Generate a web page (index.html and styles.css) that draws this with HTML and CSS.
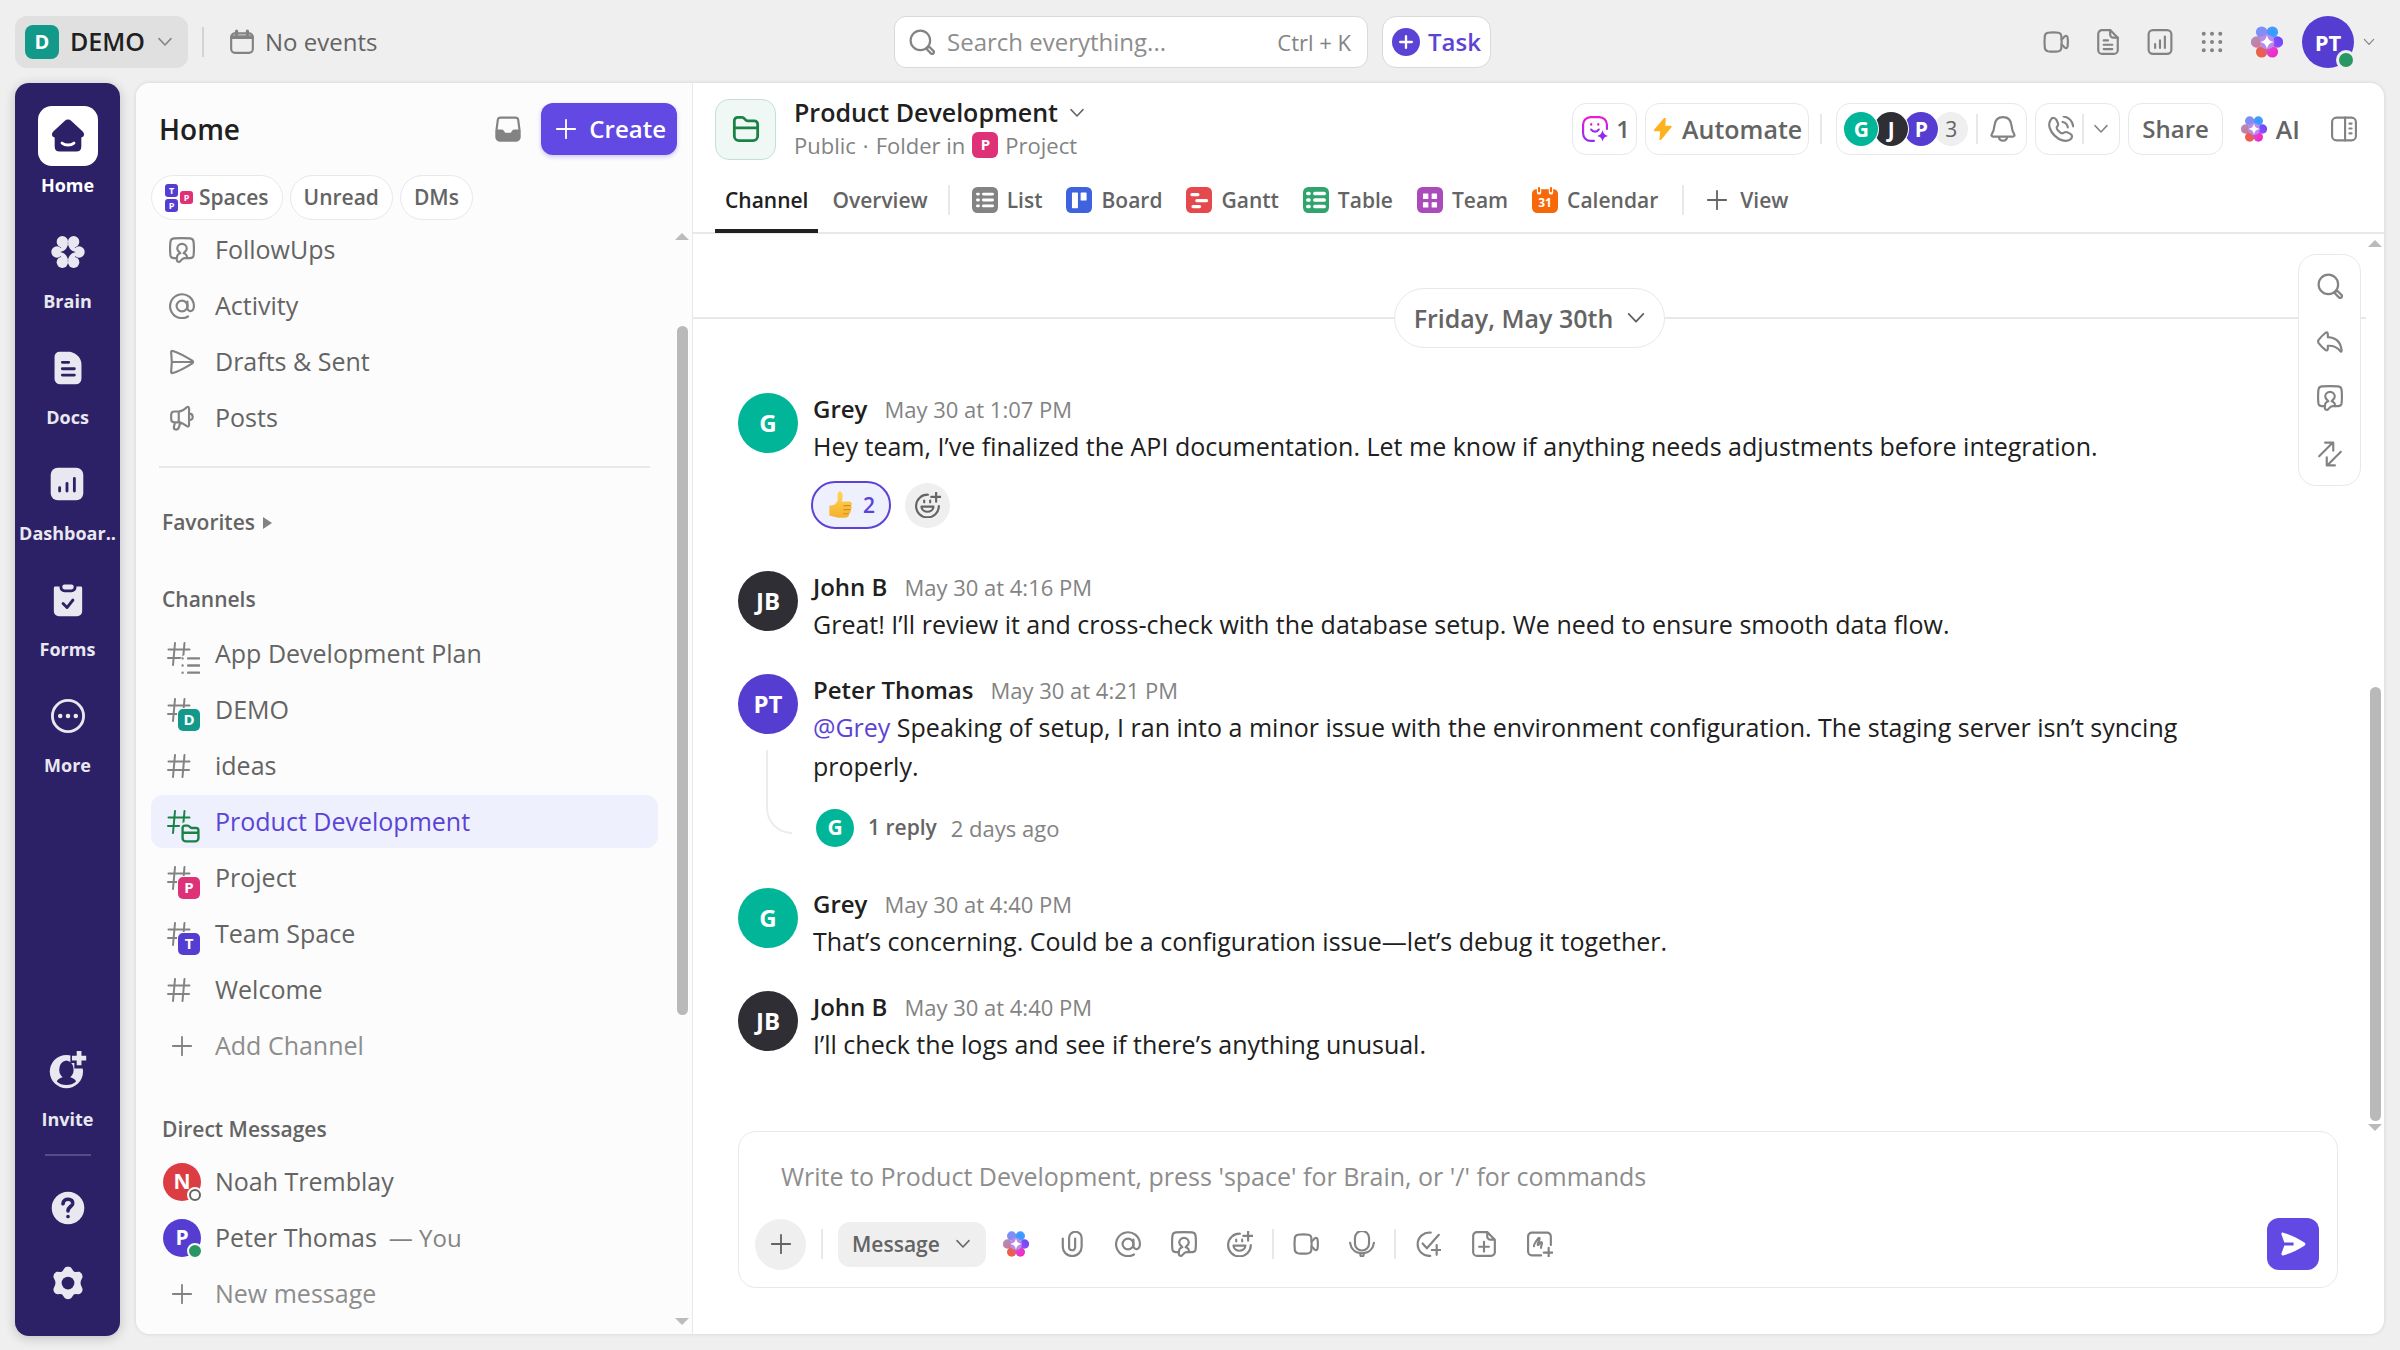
FILE: index.html
```
<!DOCTYPE html>
<html lang="en">
  <head>
    <meta charset="UTF-8" />
    <meta name="viewport" content="width=device-width, initial-scale=1.0" />
    <title>Product Development | Channel</title>
    <link rel="stylesheet" href="styles.css">
  </head>
  <body>
    <svg width="0" height="0" class="sprite">
      <defs>
        <radialGradient id="petal-sky"><stop offset="0" stop-color="#2f9bff"/><stop offset="1" stop-color="#4a9bff"/></radialGradient>
        <linearGradient id="petal-blue" x1="0" y1="0" x2="1" y2="1"><stop offset="0" stop-color="#6d94ff"/><stop offset="1" stop-color="#9a86e8"/></linearGradient>
        <linearGradient id="petal-violet" x1="1" y1="0" x2="0" y2="1"><stop offset="0" stop-color="#5a4bff"/><stop offset="1" stop-color="#a44bf0"/></linearGradient>
        <linearGradient id="petal-mauve" x1="0" y1="0" x2="1" y2="1"><stop offset="0" stop-color="#a795c4"/><stop offset="1" stop-color="#d9708a"/></linearGradient>
        <linearGradient id="petal-orange" x1="0" y1="1" x2="1" y2="0"><stop offset="0" stop-color="#f0622e"/><stop offset="1" stop-color="#dd5c86"/></linearGradient>
        <linearGradient id="petal-pink" x1="0" y1="0" x2="1" y2="1"><stop offset="0" stop-color="#d94fd0"/><stop offset="1" stop-color="#f61fc4"/></linearGradient>
        <linearGradient id="agent" x1="0" y1="0" x2="0" y2="1"><stop offset="0" stop-color="#e81bd3"/><stop offset="1" stop-color="#8f2df0"/></linearGradient>
        <linearGradient id="thumb-skin" x1="0" y1="0" x2="0" y2="1"><stop offset="0" stop-color="#ffd65a"/><stop offset="1" stop-color="#f5b02c"/></linearGradient>
      </defs>
      <symbol viewBox="0 0 24 24" id="chevron"><path d="M4 7.500l8 8.500 8-8.500"></path></symbol>
      <symbol viewBox="0 0 24 24" id="plus"><path d="M12 2v20M2 12h20"></path></symbol>
      <symbol viewBox="0 0 24 24" id="calendar">
        <rect x="2" y="4" width="20" height="18" rx="3.5"></rect>
        <path d="M3 7.5h18" stroke-width="3.4"></path>
        <path d="M7 2v3M17 2v3" stroke-width="3"></path>
      </symbol>
      <symbol viewBox="0 0 24 24" id="search">
        <circle cx="10.5" cy="10.5" r="9"></circle>
        <path d="M16.2 18.500l2.300-2.300 4 4a1.600 1.600 0 01-2.300 2.300z"></path>
      </symbol>
      <symbol viewBox="0 0 24 24" id="video">
        <path d="M4.500 3.500c3.300-.6 6.700-.6 10 0 1.500.4 2.200 1.200 2.400 2.700.4 3.800.4 7.800 0 11.600-.2 1.500-.9 2.300-2.400 2.700-3.300.6-6.700.6-10 0C2.800 20.100 2 19.300 1.700 17.800c-.4-3.800-.4-7.800 0-11.600.3-1.500 1.100-2.300 2.800-2.700z"></path>
        <path d="M17.200 9.500c1.500-.2 2-2 3-2.800 1-.8 2.200-.3 2.400.8.500 3 .5 6 0 9-.2 1.100-1.400 1.600-2.400.8-1-.8-1.500-2.600-3-2.800"></path>
      </symbol>
      <symbol viewBox="0 0 24 24" id="doc">
        <path d="M14 1H6.500A3.500 3.500 0 003 4.500v15A3.500 3.500 0 006.500 23h11a3.500 3.500 0 003.500-3.500V8z"></path>
        <path d="M14 1v4a3 3 0 003 3h4M8 10.500h4M8 14.500h8M8 18.500h8"></path>
      </symbol>
      <symbol viewBox="0 0 24 24" id="chart">
        <rect x="1.500" y="1" width="21" height="22" rx="4"></rect>
        <path d="M7.500 17.500v-3.500M12 17.500v-7M16.500 17.500V7"></path>
      </symbol>
      <symbol viewBox="0 0 24 24" id="grid">
        <path d="M3 3h.01M12 3h.01M21 3h.01M3 12h.01M12 12h.01M21 12h.01M3 21h.01M12 21h.01M21 21h.01" stroke-width="4.400"></path>
      </symbol>
      <symbol viewBox="0 0 24 24" id="brain">
        <g stroke="none">
          <circle cx="4.200" cy="12" r="4.300" fill="url(#petal-mauve)"></circle>
          <circle cx="19.800" cy="12" r="4.300" fill="url(#petal-violet)"></circle>
          <circle cx="8" cy="4.600" r="4.300" fill="url(#petal-blue)"></circle>
          <circle cx="16" cy="4.600" r="4.300" fill="url(#petal-sky)"></circle>
          <circle cx="8" cy="19.400" r="4.300" fill="url(#petal-orange)"></circle>
          <circle cx="16" cy="19.400" r="4.300" fill="url(#petal-pink)"></circle>
          <circle cx="12" cy="12" r="5.500" fill="#b98bea"></circle>
          <path d="M12 7c1 3.300 1.700 4 5 5-3.300 1-4 1.700-5 5-1-3.300-1.700-4-5-5 3.300-1 4-1.700 5-5z" fill="#fff"></path>
        </g>
      </symbol>
      <symbol viewBox="0 0 24 24" id="brain-solid">
        <g stroke="none" fill="currentColor">
          <circle cx="4.200" cy="12" r="4"></circle><circle cx="19.800" cy="12" r="4"></circle>
          <circle cx="8" cy="4.700" r="4"></circle><circle cx="16" cy="4.700" r="4"></circle>
          <circle cx="8" cy="19.300" r="4"></circle><circle cx="16" cy="19.300" r="4"></circle>
          <circle cx="12" cy="12" r="6"></circle>
          <path d="M12 6.500c1 3.500 2 4.500 5.500 5.500-3.500 1-4.500 2-5.500 5.500-1-3.500-2-4.500-5.500-5.500 3.500-1 4.500-2 5.500-5.500z" fill="#2c2166"></path>
        </g>
      </symbol>
      <symbol viewBox="0 0 24 24" id="home-solid">
        <path d="M9.600 1.400a3.400 3.400 0 014.800 0l7.800 7.300c1.900 1.900 1.200 4-.8 4.300v6.500c0 2.200-1.300 3.500-3.500 3.500H6.100c-2.200 0-3.500-1.300-3.500-3.500V13c-2-.3-2.700-2.400-.8-4.300z" fill="currentColor" stroke="none"></path>
        <path d="M7.800 17c2.300 1.800 6.100 1.800 8.400 0" stroke="#fff"></path>
      </symbol>
      <symbol viewBox="0 0 24 24" id="doc-solid">
        <path d="M6 .5h7.500c4.500 1 8 4.500 8 9V19.500a4 4 0 01-4 4h-11a4 4 0 01-4-4V4A3.500 3.500 0 016 .5z" fill="currentColor" stroke="none"></path>
        <path d="M8 8h4.500M8 12.500h8.500M8 17h8.500" stroke="#2c2166"></path>
      </symbol>
      <symbol viewBox="0 0 24 24" id="chart-solid">
        <rect x=".5" y=".5" width="23" height="23" rx="5" fill="currentColor" stroke="none"></rect>
        <path d="M6.800 17v-2.500M12 17v-5.500M17.200 17V8" stroke="#2c2166"></path>
      </symbol>
      <symbol viewBox="0 0 24 24" id="form-solid">
        <path d="M3 2.500h18a1 1 0 011 1V20a3.500 3.500 0 01-3.500 3.500h-13A3.500 3.500 0 012 20V3.500a1 1 0 011-1z" fill="currentColor" stroke="none"></path>
        <rect x="7" y="0" width="10" height="5.500" rx="2.500" fill="currentColor" stroke="#2c2166"></rect>
        <path d="M8.500 14.500l2.800 2.800 4.200-5.300" stroke="#2c2166"></path>
      </symbol>
      <symbol viewBox="0 0 24 24" id="more">
        <circle cx="12" cy="12" r="11"></circle>
        <path d="M6.500 12h.01M12 12h.01M17.500 12h.01" stroke-width="3.200"></path>
      </symbol>
      <symbol viewBox="0 0 24 24" id="invite">
        <circle cx="11" cy="13" r="10.500" fill="currentColor" stroke="none"></circle>
        <path d="M11 6a5 5.800 0 012.400 10.500c2 .5 3.200 1.400 3.700 2.700-3 3-9.200 3-12.200 0 .5-1.300 1.700-2.200 3.700-2.700A5 5.800 0 0111 6z" fill="#2c2166" stroke="none"></path>
        <path d="M19 0v11M13.500 4.500h11" stroke="#2c2166" stroke-width="6" stroke-linecap="butt"></path>
        <path d="M19 0v9M14.500 4.500h9" stroke-width="3" stroke-linecap="butt"></path>
      </symbol>
      <symbol viewBox="0 0 24 24" id="help">
        <circle cx="12" cy="12" r="11.500" fill="currentColor" stroke="none"></circle>
        <path d="M8.500 9c.2-4.500 7.500-4 6.800 0-.4 2-3.300 2.200-3.300 5M12 18h.01" stroke="#2c2166" stroke-width="2.600"></path>
      </symbol>
      <symbol viewBox="0 0 24 24" id="gear">
        <path d="M9.500 1.500c1-1.300 4-1.300 5 0l1.300 2c.4.500 1 .8 1.700.7l2-.1c1.700 0 3.300 2.600 2.600 4.200l-1 2.200c-.3.900-.3 2.100 0 3l1 2.200c.7 1.600-.9 4.200-2.600 4.200l-2-.1c-.7-.1-1.300.2-1.700.7l-1.300 2c-1 1.300-4 1.300-5 0l-1.300-2c-.4-.5-1-.8-1.700-.7l-2 .1c-1.700 0-3.300-2.600-2.600-4.200l1-2.200c.3-.9.3-2.100 0-3l-1-2.200C1.200 6.700 2.800 4.100 4.500 4.100l2 .1c.7.1 1.300-.2 1.700-.7z" fill="currentColor" stroke="none"></path>
        <circle cx="12" cy="12" r="4.500" fill="#2c2166" stroke="none"></circle>
      </symbol>
      <symbol viewBox="0 0 24 24" id="inbox">
        <path d="M5 1.500h14a2.500 2.500 0 012.400 2l1.100 8.500v7.500a3 3 0 01-3 3h-15a3 3 0 01-3-3V12l1.100-8.500A2.500 2.500 0 015 1.500z"></path>
        <path d="M1.500 13.500h5c1.200 0 1.500 3 3 3h5c1.500 0 1.800-3 3-3h5v6a3 3 0 01-3 3h-15a3 3 0 01-3-3z" fill="currentColor"></path>
      </symbol>
      <symbol viewBox="0 0 24 24" id="followup">
        <path d="M7 19.500H4.500C2.500 19.500 1.500 18.500 1.300 17c-.4-4-.4-8.500 0-12.500C1.500 2.500 2.500 1.500 4.500 1.300c5-.4 10-.4 15 0 2 .2 3 1.200 3.200 3.200.4 4 .4 8.500 0 12.500-.2 1.500-1.200 2.500-3.200 2.500h-5c-2 0-3.200 1.800-4.200 3-.8.900-3 .5-3-1z"></path>
        <path d="M7.300 19.500c0-2.500 1-4 3.200-4.500-.3-1-2.900-1.700-2.900-4.300a4.400 4.400 0 018.800 0c0 2.600-2.600 3.300-2.900 4.300 2.200.5 3.200 2 3.200 4.500"></path>
      </symbol>
      <symbol viewBox="0 0 24 24" id="at">
        <circle cx="12" cy="12" r="5"></circle>
        <path d="M17 8v5.500c0 4.500 6 4.500 6-1.500A11 11 0 1017.500 21.700"></path>
      </symbol>
      <symbol viewBox="0 0 24 24" id="send">
        <path d="M3.500 1.800C9 3.500 15 6.700 21.500 10.800c1 .7 1 1.700 0 2.400C15 17.300 9 20.500 3.500 22.200c-1.200.3-1.700-.4-1.500-1.400.8-6 .8-11.600 0-17.600-.2-1 .3-1.700 1.500-1.400zM3 12h19"></path>
      </symbol>
      <symbol viewBox="0 0 24 24" id="posts">
        <path d="M9 6H5c-2 0-3 1-3 3v4c0 2 1 3 3 3h4c3 .3 5 1.500 7.500 3.500 1 .7 2 .3 2-1V3c0-1.300-1-1.700-2-1C14 4.500 12 5.700 9 6zM9 6v10M5.500 16l-1 4.500c-.3 2.500 3.500 3 4.500.5l1.500-5M18.500 8c4-.3 5 5.500 0 6"></path>
      </symbol>
      <symbol viewBox="0 0 24 24" id="hash"><path d="M8 1L6 23M17.500 1l-2 22M1.500 7.500h21M1 16h21"></path></symbol>
      <symbol viewBox="0 0 24 24" id="folder">
        <path d="M2 17V5a3 3 0 013-3h3.500c2.500 0 2.500 3 5 3H19a3 3 0 013 3v10a4 4 0 01-4 4H6a4 4 0 01-4-4zM2 11h20"></path>
      </symbol>
      <symbol viewBox="0 0 24 24" id="list"><path d="M2 3h.01M2 12h.01M2 21h.01M9 3h14M9 12h14M9 21h14"></path></symbol>
      <symbol viewBox="0 0 24 24" id="agent-face">
        <path d="M11 23H8a7 7 0 01-7-7V8a7 7 0 017-7h8a7 7 0 017 7v4"></path>
        <path d="M8.500 7.500v.5M15 7.500v.5M8.500 12.500c1.500 2.500 5.500 2.500 7 0"></path>
        <path d="M19 13c1 3.500 1.700 4.200 5 5.500-3.300 1-4 1.700-5 5-1-3.300-1.700-4-5-5 3.300-1.300 4-2 5-5.500z" fill="#9a25ee" stroke="none"></path>
      </symbol>
      <symbol viewBox="0 0 24 24" id="bolt"><path d="M14 .5L3 13.500h7L9 23.500l11.500-14H13.500z" fill="#ffb220" stroke="#ffb220"></path></symbol>
      <symbol viewBox="0 0 24 24" id="bell">
        <path d="M12 1c-4.500 0-7.300 3-7.800 7.500-.3 3-.5 5.500-2.600 8.500-.6 1.200.1 2 1.300 2h18.200c1.200 0 1.900-.8 1.300-2-2.100-3-2.300-5.500-2.600-8.500C19.300 4 16.500 1 12 1zM8 19c.7 5 7.300 5 8 0"></path>
      </symbol>
      <symbol viewBox="0 0 24 24" id="phone">
        <path d="M2.500 3.500c1.500-2.500 4.300-2 5.200 0l1.500 3.200c.7 1.800-.7 2.700-1.200 4-.3 1.500 3.700 5.500 5.500 5.300 1.300-.4 2.200-1.800 4-1.100l3.200 1.600c1.700.9 2.200 3.400 0 5C12 27.500-3.500 12.500 2.500 3.500zM13.500 5.500c2.800.5 4.300 2 4.800 5M14.500.5c4.700.8 7.800 3.800 8.800 9"></path>
      </symbol>
      <symbol viewBox="0 0 24 24" id="panel">
        <rect x="1" y="1.500" width="22" height="21" rx="4"></rect>
        <path d="M13 1.500v21M17 7h2M17 11.500h2M17 16h2"></path>
      </symbol>
      <symbol viewBox="0 0 24 24" id="view-list">
        <rect width="24" height="24" rx="5" fill="#838383" stroke="none"></rect>
        <path d="M5 6.500h1M5 12h1M5 17.500h1M10.500 6.500h8.500M10.500 12h8.500M10.500 17.500h8.500" stroke="#fff" stroke-width="2.600"></path>
      </symbol>
      <symbol viewBox="0 0 24 24" id="view-board">
        <rect width="24" height="24" rx="5" fill="#3e63dd" stroke="none"></rect>
        <path d="M6 5.500h4.500V19H6zM14 5.500h4.500v6.500H14z" fill="#fff" stroke="#fff" stroke-width="1"></path>
      </symbol>
      <symbol viewBox="0 0 24 24" id="view-gantt">
        <rect width="24" height="24" rx="5" fill="#e5484d" stroke="none"></rect>
        <path d="M5.500 7h5.500M10 12.500h9M6.500 18h6" stroke="#fff" stroke-width="3"></path>
      </symbol>
      <symbol viewBox="0 0 24 24" id="view-table">
        <rect width="24" height="24" rx="5" fill="#30a46c" stroke="none"></rect>
        <path d="M4.500 6h1M4.500 12h1M4.500 18h1M11 6h8.500M11 12h8.500M11 18h8.500" stroke="#fff" stroke-width="3.400"></path>
      </symbol>
      <symbol viewBox="0 0 24 24" id="view-team">
        <rect width="24" height="24" rx="5" fill="#ab4aba" stroke="none"></rect>
        <path d="M6 6.500h4v4H6zM14 6.500h4v4h-4zM6 14.500h4v4H6zM14 14.500h4v4h-4z" fill="#fff" stroke="#fff" stroke-width="1"></path>
      </symbol>
      <symbol viewBox="0 0 24 24" id="emoji-add">
        <path d="M12 2.500A10.500 10.500 0 1022 13M8.500 8v1.500M14 8v1.500M6 13.500h11c-.3 6.300-10.700 6.300-11 0zM19.500 0v9M15 4.500h9"></path>
      </symbol>
      <symbol viewBox="0 0 24 24" id="clip">
        <path d="M3.500 7v7.500a8.700 8.700 0 0017.400 0V6.500a5.800 5.800 0 00-11.600 0v8.500a2.800 2.800 0 005.600 0V7"></path>
      </symbol>
      <symbol viewBox="0 0 24 24" id="mic">
        <rect x="5.500" y="0" width="13" height="18" rx="6.500"></rect>
        <path d="M1 11c.8 5.500 4.700 9.500 11 9.500s10.200-4 11-9.500M10.500 20.500V22a1.500 1.500 0 003 0v-1.500"></path>
      </symbol>
      <symbol viewBox="0 0 24 24" id="task-add">
        <path d="M14.500 1.500A10.800 10.800 0 1014 23M7 11.500l4 4.500L22 3.500M20 13v9M15.500 17.500h9"></path>
      </symbol>
      <symbol viewBox="0 0 24 24" id="doc-add">
        <path d="M15 1H5.500A3.500 3.500 0 002 4.500v15A3.500 3.500 0 005.500 23h13a3.500 3.500 0 003.500-3.500V8zM15 1v4a3 3 0 003 3h4M12 10v9M7.500 14.500h9"></path>
      </symbol>
      <symbol viewBox="0 0 24 24" id="board-add">
        <path d="M13 22.500H4.500a3.500 3.500 0 01-3.500-3.500V5a3.500 3.500 0 013.500-3.500h14A3.500 3.500 0 0122 5v8M6.500 14c-.5-1 4-8.500 5-7.500s-2.500 6-1.500 6.500 2.500-3.500 3.500-2.500-1 4-.5 5M20 15.500v9M15.500 20h9"></path>
      </symbol>
      <symbol viewBox="0 0 24 24" id="reply">
        <path d="M10 7.500V5c0-1.800-1-2.300-2.300-1.300C5 5.800 3.500 7.500 1.500 10c-.6 1-.6 2 0 3 2 2.500 3.500 4.200 6.200 6.300 1.300 1 2.300.5 2.300-1.300v-2.500c5-.3 8.500 1 11.500 5 .7.700 1.300.3 1.200-.7C22 12 17.500 8 10 7.500z"></path>
      </symbol>
      <symbol viewBox="0 0 24 24" id="sync">
        <path d="M2 14L14 2M7.500 1.500H15v7.500M22 10L10 22M16.500 22.500H9V15"></path>
      </symbol>
      <symbol viewBox="0 0 24 24" id="thumb">
        <path d="M9 8.500C9.500 6 8.500 3 9.500 1c1-1.500 3.500-.5 3.800 2 .4 2.500-.3 4-.8 6h6.500c2.500 0 3 2.500 1.500 3.500 1.200 1 1 3-.5 3.600.9 1.200.3 2.900-1.200 3.300.3 1.600-.7 3.300-2.500 3.300-5 .4-7 .3-10-.7L2 21v-8.500c4 0 5.500-1.500 7-4z" fill="url(#thumb-skin)" stroke="none"></path>
        <path d="M14.500 12.500h5.500M14.500 16h5.500M14 19.500h4.500" stroke="#d98a1c" stroke-width="1"></path>
      </symbol>
    </svg>

    <div class="app">
      <header class="topbar">
        <div class="topbar-side">
          <button class="workspace"><span class="tile tile-lg teal">D</span>DEMO<svg class="icon icon-xs"><use href="#chevron"></use></svg></button>
          <span class="rule"></span>
          <button class="plain events"><svg class="icon"><use href="#calendar"></use></svg>No events</button>
        </div>
        <div class="topbar-center">
          <label class="search">
            <svg class="icon"><use href="#search"></use></svg>
            <input type="text" placeholder="Search everything..." aria-label="Search everything" />
            <kbd>Ctrl + K</kbd>
          </label>
          <button class="box task"><span class="plus-dot"><svg class="icon"><use href="#plus"></use></svg></span>Task</button>
        </div>
        <div class="topbar-side topbar-end">
          <button class="plain" aria-label="Clips"><svg class="icon"><use href="#video"></use></svg></button>
          <button class="plain" aria-label="Notepad"><svg class="icon"><use href="#doc"></use></svg></button>
          <button class="plain" aria-label="Reports"><svg class="icon"><use href="#chart"></use></svg></button>
          <button class="plain" aria-label="Apps"><svg class="icon icon-sm"><use href="#grid"></use></svg></button>
          <button class="plain" aria-label="Brain"><svg class="icon icon-lg"><use href="#brain"></use></svg></button>
          <button class="plain profile" aria-label="Profile"><span class="avatar avatar-md indigo">PT<i class="status online"></i></span><svg class="icon icon-xs"><use href="#chevron"></use></svg></button>
        </div>
      </header>

      <nav class="rail">
        <a href="#" class="rail-item active"><span class="rail-tile"><svg class="icon icon-xl"><use href="#home-solid"></use></svg></span>Home</a>
        <a href="#" class="rail-item"><span class="rail-tile"><svg class="icon icon-xl"><use href="#brain-solid"></use></svg></span>Brain</a>
        <a href="#" class="rail-item"><span class="rail-tile"><svg class="icon icon-xl"><use href="#doc-solid"></use></svg></span>Docs</a>
        <a href="#" class="rail-item"><span class="rail-tile"><svg class="icon icon-xl"><use href="#chart-solid"></use></svg></span>Dashboar..</a>
        <a href="#" class="rail-item"><span class="rail-tile"><svg class="icon icon-xl"><use href="#form-solid"></use></svg></span>Forms</a>
        <a href="#" class="rail-item"><span class="rail-tile"><svg class="icon icon-xl"><use href="#more"></use></svg></span>More</a>
        <a href="#" class="rail-item rail-invite"><span class="rail-tile"><svg class="icon icon-xxl"><use href="#invite"></use></svg></span>Invite</a>
        <hr />
        <a href="#" class="rail-item" aria-label="Help"><span class="rail-tile"><svg class="icon icon-xl"><use href="#help"></use></svg></span></a>
        <a href="#" class="rail-item" aria-label="Settings"><span class="rail-tile"><svg class="icon icon-xl"><use href="#gear"></use></svg></span></a>
      </nav>

      <div class="panel">
        <aside class="sidebar">
          <div class="sidebar-head">
            <h1>Home</h1>
            <button class="plain" aria-label="Inbox"><svg class="icon"><use href="#inbox"></use></svg></button>
            <button class="create"><svg class="icon icon-sm"><use href="#plus"></use></svg>Create</button>
          </div>
          <div class="pills">
            <button class="pill spaces">
              <span class="space-tiles"><i class="mini indigo">T</i><i class="mini indigo">P</i><i class="mini pink">P</i></span>Spaces
            </button>
            <button class="pill">Unread</button>
            <button class="pill">DMs</button>
          </div>
          <div class="sidebar-scroll">
            <div class="sidebar-list">
              <a href="#" class="row"><span class="row-icon"><svg class="icon"><use href="#followup"></use></svg></span>FollowUps</a>
              <a href="#" class="row"><span class="row-icon"><svg class="icon"><use href="#at"></use></svg></span>Activity</a>
              <a href="#" class="row"><span class="row-icon"><svg class="icon"><use href="#send"></use></svg></span>Drafts &amp; Sent</a>
              <a href="#" class="row"><span class="row-icon"><svg class="icon"><use href="#posts"></use></svg></span>Posts</a>
              <hr />
              <h2 class="favorites">Favorites <i class="caret"></i></h2>
              <h2>Channels</h2>
              <a href="#" class="row"><span class="row-icon"><svg class="icon hash"><use href="#hash"></use></svg><svg class="icon corner"><use href="#list"></use></svg></span>App Development Plan</a>
              <a href="#" class="row"><span class="row-icon"><svg class="icon hash"><use href="#hash"></use></svg><i class="tile corner teal">D</i></span>DEMO</a>
              <a href="#" class="row"><span class="row-icon"><svg class="icon hash"><use href="#hash"></use></svg></span>ideas</a>
              <a href="#" class="row selected"><span class="row-icon"><svg class="icon hash"><use href="#hash"></use></svg><svg class="icon corner"><use href="#folder"></use></svg></span>Product Development</a>
              <a href="#" class="row"><span class="row-icon"><svg class="icon hash"><use href="#hash"></use></svg><i class="tile corner pink">P</i></span>Project</a>
              <a href="#" class="row"><span class="row-icon"><svg class="icon hash"><use href="#hash"></use></svg><i class="tile corner indigo">T</i></span>Team Space</a>
              <a href="#" class="row"><span class="row-icon"><svg class="icon hash"><use href="#hash"></use></svg></span>Welcome</a>
              <a href="#" class="row muted"><span class="row-icon"><svg class="icon icon-sm"><use href="#plus"></use></svg></span>Add Channel</a>
              <h2 class="dm-title">Direct Messages</h2>
              <a href="#" class="row"><span class="row-icon"><span class="avatar avatar-sm red">N<i class="status offline"></i></span></span>Noah Tremblay</a>
              <a href="#" class="row"><span class="row-icon"><span class="avatar avatar-sm indigo">P<i class="status online"></i></span></span>Peter Thomas <small>— You</small></a>
              <a href="#" class="row muted"><span class="row-icon"><svg class="icon icon-sm"><use href="#plus"></use></svg></span>New message</a>
            </div>
            <div class="scrollbar"><i class="arrow up"></i><i class="space space-sidebar"></i><i class="thumb thumb-sidebar"></i><i class="rest"></i><i class="arrow down"></i></div>
          </div>
        </aside>

        <main class="main">
          <header class="channel-head">
            <span class="folder-tile"><svg class="icon icon-xl"><use href="#folder"></use></svg></span>
            <div class="channel-title">
              <button class="plain title">Product Development<svg class="icon icon-xs"><use href="#chevron"></use></svg></button>
              <p>Public <span class="dot">·</span> Folder in <span class="tile pink">P</span> <a href="#">Project</a></p>
            </div>
            <div class="channel-tools">
              <button class="box agent"><svg class="icon"><use href="#agent-face"></use></svg>1</button>
              <button class="box automate"><svg class="icon icon-sm"><use href="#bolt"></use></svg>Automate</button>
              <span class="rule"></span>
              <div class="box people">
                <button class="plain faces" aria-label="3 members"><span class="avatar green">G</span><span class="avatar dark">J</span><span class="avatar indigo">P</span><span class="avatar count">3</span></button>
                <span class="rule"></span>
                <button class="plain" aria-label="Notifications"><svg class="icon"><use href="#bell"></use></svg></button>
              </div>
              <div class="box call">
                <button class="plain" aria-label="SyncUp"><svg class="icon"><use href="#phone"></use></svg></button>
                <span class="rule"></span>
                <button class="plain" aria-label="Call options"><svg class="icon icon-xs"><use href="#chevron"></use></svg></button>
              </div>
              <button class="box">Share</button>
              <button class="plain ai"><svg class="icon"><use href="#brain"></use></svg>AI</button>
              <button class="plain" aria-label="Toggle panel"><svg class="icon"><use href="#panel"></use></svg></button>
            </div>
          </header>

          <nav class="tabs">
            <a href="#" class="tab current">Channel</a>
            <a href="#" class="tab">Overview</a>
            <span class="rule"></span>
            <a href="#" class="tab"><svg class="icon"><use href="#view-list"></use></svg>List</a>
            <a href="#" class="tab"><svg class="icon"><use href="#view-board"></use></svg>Board</a>
            <a href="#" class="tab"><svg class="icon"><use href="#view-gantt"></use></svg>Gantt</a>
            <a href="#" class="tab"><svg class="icon"><use href="#view-table"></use></svg>Table</a>
            <a href="#" class="tab"><svg class="icon"><use href="#view-team"></use></svg>Team</a>
            <a href="#" class="tab">
              <svg class="icon" viewBox="0 0 24 24">
                <path d="M4 2h16a4 4 0 014 4v13a5 5 0 01-5 5H5a5 5 0 01-5-5V6a4 4 0 014-4z" fill="#f76808" stroke="none"></path>
                <path d="M6.500 0v5M17.500 0v5" stroke="#fff" stroke-width="4"></path>
                <path d="M6.500 1v3M17.500 1v3" stroke="#f76808" stroke-width="2"></path>
                <text x="12" y="18.500" font-size="11" font-weight="700" text-anchor="middle" fill="#fff" stroke="none">31</text>
              </svg>Calendar</a>
            <span class="rule"></span>
            <button class="tab plain add-view"><svg class="icon icon-sm"><use href="#plus"></use></svg>View</button>
          </nav>

          <div class="chat">
            <div class="chat-column">
              <div class="feed">
                <div class="date-line"><button class="date-pill">Friday, May 30th<svg class="icon icon-sm"><use href="#chevron"></use></svg></button></div>
                <article class="message">
                  <span class="avatar avatar-lg green">G</span>
                  <div class="message-body">
                    <div class="meta"><strong>Grey</strong><time>May 30 at 1:07 PM</time></div>
                    <p>Hey team, I’ve finalized the API documentation. Let me know if anything needs adjustments before integration.</p>
                    <div class="reactions">
                      <button class="reaction"><svg class="icon"><use href="#thumb"></use></svg>2</button>
                      <button class="react-add" aria-label="Add reaction"><svg class="icon"><use href="#emoji-add"></use></svg></button>
                    </div>
                  </div>
                </article>
                <article class="message">
                  <span class="avatar avatar-lg dark">JB</span>
                  <div class="message-body">
                    <div class="meta"><strong>John B</strong><time>May 30 at 4:16 PM</time></div>
                    <p>Great! I’ll review it and cross-check with the database setup. We need to ensure smooth data flow.</p>
                  </div>
                </article>
                <article class="message threaded">
                  <span class="avatar avatar-lg indigo">PT</span>
                  <div class="message-body">
                    <div class="meta"><strong>Peter Thomas</strong><time>May 30 at 4:21 PM</time></div>
                    <p><a href="#">@Grey</a> Speaking of setup, I ran into a minor issue with the environment configuration. The staging server isn’t syncing properly.</p>
                    <div class="thread"><span class="avatar avatar-sm green">G</span><a href="#">1 reply</a><time>2 days ago</time></div>
                  </div>
                </article>
                <article class="message">
                  <span class="avatar avatar-lg green">G</span>
                  <div class="message-body">
                    <div class="meta"><strong>Grey</strong><time>May 30 at 4:40 PM</time></div>
                    <p>That’s concerning. Could be a configuration issue—let’s debug it together.</p>
                  </div>
                </article>
                <article class="message">
                  <span class="avatar avatar-lg dark">JB</span>
                  <div class="message-body">
                    <div class="meta"><strong>John B</strong><time>May 30 at 4:40 PM</time></div>
                    <p>I’ll check the logs and see if there’s anything unusual.</p>
                  </div>
                </article>
              </div>
              <div class="scrollbar"><i class="arrow up"></i><i class="space space-chat"></i><i class="thumb thumb-chat"></i><i class="rest"></i><i class="arrow down"></i></div>
              <div class="float-tools">
                <button class="plain" aria-label="Search channel"><svg class="icon"><use href="#search"></use></svg></button>
                <button class="plain" aria-label="Replies"><svg class="icon"><use href="#reply"></use></svg></button>
                <button class="plain" aria-label="FollowUps"><svg class="icon"><use href="#followup"></use></svg></button>
                <button class="plain" aria-label="SyncUps"><svg class="icon"><use href="#sync"></use></svg></button>
              </div>
            </div>

            <form class="composer">
              <textarea rows="1" aria-label="Message" placeholder="Write to Product Development, press 'space' for Brain, or '/' for commands"></textarea>
              <div class="composer-bar">
                <button type="button" class="round" aria-label="Add"><svg class="icon icon-sm"><use href="#plus"></use></svg></button>
                <span class="rule"></span>
                <label class="kind">
                  <select aria-label="Type"><option>Message</option></select>
                  <svg class="icon icon-xs"><use href="#chevron"></use></svg>
                </label>
                <button type="button" class="plain tool" aria-label="Brain"><svg class="icon"><use href="#brain"></use></svg></button>
                <button type="button" class="plain tool" aria-label="Attach"><svg class="icon"><use href="#clip"></use></svg></button>
                <button type="button" class="plain tool" aria-label="Mention"><svg class="icon"><use href="#at"></use></svg></button>
                <button type="button" class="plain tool" aria-label="FollowUp"><svg class="icon"><use href="#followup"></use></svg></button>
                <button type="button" class="plain tool" aria-label="Emoji"><svg class="icon"><use href="#emoji-add"></use></svg></button>
                <span class="rule"></span>
                <button type="button" class="plain tool" aria-label="Video clip"><svg class="icon"><use href="#video"></use></svg></button>
                <button type="button" class="plain tool" aria-label="Voice clip"><svg class="icon"><use href="#mic"></use></svg></button>
                <span class="rule"></span>
                <button type="button" class="plain tool" aria-label="Create task"><svg class="icon"><use href="#task-add"></use></svg></button>
                <button type="button" class="plain tool" aria-label="Create doc"><svg class="icon"><use href="#doc-add"></use></svg></button>
                <button type="button" class="plain tool" aria-label="Create whiteboard"><svg class="icon"><use href="#board-add"></use></svg></button>
                <button type="submit" class="send" aria-label="Send"><svg viewBox="0 0 24 24" class="icon"><path d="M3 1.500C9 3 16 6.500 22.500 10.500c1.300.9 1.300 2.100 0 3C16 17.500 9 21 3 22.500c-1.500.3-2-.7-1.500-2.200L4 13.300h8.500v-2.600H4L1.500 3.700C1 2.200 1.500 1.200 3 1.500z" fill="currentColor" stroke="none"></path></svg></button>
              </div>
            </form>
          </div>
        </main>
      </div>
    </div>
  </body>
</html>
```
FILE: styles.css
```
:root {
  --ink: #202020;
  --text: #646464;
  --soft: #838383;
  --line: #e8e8e8;
  --purple: #5b43d6;
  --indigo: #563dd1;
  --navy: #2c2166;
}

*,
*::before,
*::after {
  box-sizing: border-box;
  margin: 0;
  padding: 0;
}

body {
  height: 100vh;
  background-color: #efefef;
  color: var(--text);
  font-family: "Open Sans", "Noto Sans", sans-serif;
  font-size: 24px;
  line-height: 1;
  overflow: hidden;
}

button,
input,
select,
textarea {
  border: 0;
  background: none;
  color: inherit;
  font: inherit;
  outline: 0;
}

button {
  display: flex;
  align-items: center;
  justify-content: center;
  white-space: nowrap;
}

a {
  color: inherit;
  text-decoration: none;
}

i,
small {
  font-style: normal;
  font-size: inherit;
}

.sprite {
  position: absolute;
}

.icon {
  flex: none;
  width: 26px;
  height: 26px;
  fill: none;
  stroke: currentColor;
  stroke-width: 2;
  stroke-linecap: round;
  stroke-linejoin: round;
  overflow: visible;
}

.icon-xs {
  width: 18px;
  height: 18px;
}

.icon-sm {
  width: 22px;
  height: 22px;
}

.icon-lg {
  width: 32px;
  height: 32px;
}

.icon-xl {
  width: 34px;
  height: 34px;
}

.icon-xxl {
  width: 38px;
  height: 38px;
}

.plain {
  color: var(--soft);
}

.rule {
  flex: none;
  width: 2px;
  height: 30px;
  background-color: var(--line);
}

.teal {
  background-color: #12998a;
}

.green {
  background-color: #00b598;
}

.indigo {
  background-color: var(--indigo);
}

.pink {
  background-color: #de3178;
}

.red {
  background-color: #dc3d43;
}

.dark {
  background-color: #2e2e34;
}

.tile {
  display: inline-flex;
  align-items: center;
  justify-content: center;
  width: 26px;
  height: 26px;
  border-radius: 6px;
  color: #fff;
  font-size: 15px;
  font-weight: 700;
}

.tile-lg {
  width: 34px;
  height: 34px;
  border-radius: 8px;
  font-size: 20px;
}

.avatar {
  position: relative;
  display: flex;
  align-items: center;
  justify-content: center;
  flex: none;
  width: 34px;
  height: 34px;
  border-radius: 50%;
  color: #fff;
  font-size: 21px;
  font-weight: 700;
}

.avatar-sm {
  width: 38px;
  height: 38px;
}

.avatar-md {
  width: 52px;
  height: 52px;
  font-size: 22px;
}

.avatar-lg {
  width: 60px;
  height: 60px;
  font-size: 24px;
}

.status {
  position: absolute;
  right: -2px;
  bottom: -2px;
  width: 16px;
  height: 16px;
  border: 2px solid #fcfcfc;
  border-radius: 50%;
}

.online {
  background-color: #299764;
}

.offline {
  background-color: #fcfcfc;
}

.offline::before {
  content: "";
  display: block;
  height: 12px;
  border: 2px solid #646464;
  border-radius: 50%;
}

.avatar-md .status {
  width: 20px;
  height: 20px;
  border: 3px solid #efefef;
}

.app {
  display: grid;
  grid-template: 83px 1fr / 105px 1fr;
  column-gap: 16px;
  height: 100%;
  padding: 0 16px 14px 15px;
}

/* top bar */

.topbar {
  grid-column: 1 / 3;
  display: grid;
  grid-template-columns: 1fr auto 1fr;
  align-items: center;
}

.topbar-side,
.topbar-center {
  display: flex;
  align-items: center;
}

.workspace {
  gap: 11px;
  height: 52px;
  padding: 0 14px 0 10px;
  border-radius: 12px;
  background-color: #e0e0e0;
  color: var(--ink);
  font-size: 25px;
  font-weight: 600;
}

.workspace .icon {
  color: var(--soft);
}

.topbar-side .rule {
  margin: 0 25px 0 14px;
  background-color: #d3d3d3;
}

.events {
  gap: 10px;
  color: var(--text);
}

.events .icon {
  color: var(--soft);
}

.topbar-center {
  gap: 14px;
  margin-right: 14px;
}

.search {
  display: flex;
  align-items: center;
  gap: 12px;
  width: 474px;
  height: 52px;
  padding: 0 16px 0 14px;
  border: 1px solid #d9d9d9;
  border-radius: 12px;
  background-color: #fff;
  color: var(--soft);
}

.search input {
  flex: 1;
  min-width: 0;
}

::placeholder {
  color: #8d8d8d;
  opacity: 1;
}

.search kbd {
  font-family: inherit;
  font-size: 22px;
}

.box {
  display: flex;
  align-items: center;
  gap: 8px;
  height: 52px;
  padding: 0 13px;
  border: 1px solid var(--line);
  border-radius: 14px;
  background-color: #fff;
  font-weight: 600;
}

.task {
  padding: 0 9px;
  border-color: #d9d9d9;
  color: var(--purple);
}

.plus-dot {
  display: flex;
  align-items: center;
  justify-content: center;
  width: 28px;
  height: 28px;
  border-radius: 50%;
  background-color: var(--purple);
  color: #fff;
}

.plus-dot .icon {
  width: 14px;
  height: 14px;
  stroke-width: 4;
}

.topbar-end {
  justify-content: flex-end;
  gap: 26px;
  padding-right: 8px;
}

.topbar-end .icon-sm {
  margin: 0 2px;
}

.profile {
  gap: 8px;
  margin-left: -7px;
}

.topbar-end .icon-xs {
  width: 14px;
  height: 14px;
}

/* icon rail */

.rail {
  display: flex;
  flex-direction: column;
  align-items: center;
  padding: 23px 0;
  border-radius: 14px;
  background-color: var(--navy);
  box-shadow: 0 2px 12px rgba(0, 0, 0, 0.2);
  color: #e9e8f0;
}

.rail-item {
  display: flex;
  flex-direction: column;
  align-items: center;
  margin-bottom: 18px;
  font-size: 18px;
  font-weight: 700;
  line-height: 38px;
}

.rail-tile {
  display: flex;
  align-items: center;
  justify-content: center;
  width: 60px;
  height: 60px;
  border-radius: 14px;
}

.active {
  color: #fff;
}

.active .rail-tile {
  background-color: #fff;
  color: var(--navy);
}

.rail-invite {
  margin-top: auto;
  margin-bottom: 16px;
}

.rail hr {
  width: 46px;
  margin-bottom: 22px;
  border: 0;
  border-top: 2px solid #564d85;
}

.rail hr ~ .rail-item {
  margin-bottom: 15px;
}

.rail hr ~ .rail-item:last-child {
  margin-bottom: 0;
}

/* sidebar */

.panel {
  display: grid;
  grid-template-columns: 557px 1fr;
  min-height: 0;
  margin-bottom: 2px;
  border-radius: 14px;
  background-color: #fff;
  box-shadow: 0 0 4px rgba(0, 0, 0, 0.12);
  overflow: hidden;
}

.sidebar {
  display: flex;
  flex-direction: column;
  min-height: 0;
  border-right: 1px solid var(--line);
  background-color: #fcfcfc;
}

.sidebar-head {
  display: flex;
  align-items: center;
  gap: 20px;
  padding: 20px 15px 20px 23px;
}

h1 {
  flex: 1;
  color: var(--ink);
  font-size: 28px;
  font-weight: 600;
}

.create {
  gap: 12px;
  height: 52px;
  padding: 0 11px 0 14px;
  border-radius: 12px;
  background-color: #6249e4;
  box-shadow: 0 2px 4px rgba(98, 73, 228, 0.3);
  color: #fff;
  font-weight: 600;
}

.pills {
  display: flex;
  gap: 7px;
  padding: 0 15px 11px;
}

.pill {
  height: 45px;
  padding: 0 13px;
  border: 1px solid var(--line);
  border-radius: 23px;
  background-color: #fff;
  font-size: 21px;
  font-weight: 600;
}

.spaces {
  gap: 6px;
}

.space-tiles {
  display: grid;
  grid-template-columns: 13px 13px;
  grid-auto-flow: column;
  grid-template-rows: 13px 13px;
  align-items: center;
  gap: 2px;
}

.mini {
  display: flex;
  align-items: center;
  justify-content: center;
  height: 13px;
  border-radius: 3px;
  color: #fff;
  font-size: 9px;
  font-weight: 700;
}

.mini:last-child {
  grid-row: 1 / 3;
}

.sidebar-scroll {
  display: flex;
  flex: 1;
  min-height: 0;
}

.sidebar-list {
  flex: 1;
  padding: 0 14px 0 15px;
  font-size: 25px;
  overflow: hidden;
}

.row {
  display: flex;
  align-items: center;
  gap: 16px;
  height: 53px;
  margin-bottom: 3px;
  padding: 0 11px;
  border-radius: 12px;
}

.row:first-child {
  margin-top: -8px;
}

.row small {
  margin-left: -4px;
  color: var(--soft);
  font-size: 24px;
}

.row-icon {
  position: relative;
  display: flex;
  align-items: center;
  justify-content: center;
  flex: none;
  width: 38px;
  height: 38px;
  margin-left: 1px;
  margin-right: -2px;
  color: var(--soft);
}

.hash {
  width: 24px;
  height: 24px;
  margin-right: 6px;
}

.corner {
  position: absolute;
  right: 1px;
  bottom: -2px;
  width: 22px;
  height: 22px;
  border-radius: 5px;
  background-color: #fcfcfc;
  box-shadow: 0 0 0 1px #fcfcfc;
}

svg.corner {
  width: 19px;
  height: 19px;
  stroke-width: 3;
}

.corner.teal {
  background-color: #12998a;
}

.corner.pink {
  background-color: #de3178;
}

.corner.indigo {
  background-color: var(--indigo);
}

.selected {
  background-color: #eef0fe;
  color: var(--purple);
}

.selected .row-icon {
  color: #1a8245;
}

.selected .corner {
  background-color: #eef0fe;
  box-shadow: 0 0 0 2px #eef0fe;
}

.muted {
  color: #8d8d8d;
}

.sidebar-list hr {
  margin: 22px 8px 0;
  border: 0;
  border-top: 2px solid var(--line);
}

h2 {
  padding-left: 11px;
  font-size: 21px;
  font-weight: 600;
  line-height: 55px;
}

.favorites {
  display: flex;
  align-items: center;
  gap: 8px;
  margin: 27px 0 22px;
}

.caret {
  border: 6px solid transparent;
  border-left: 9px solid var(--soft);
  border-right: 0;
}

h2.dm-title {
  margin-top: 31px;
  line-height: 52px;
}

.scrollbar {
  display: flex;
  flex-direction: column;
  align-items: center;
  width: 18px;
  padding: 2px 0 9px;
}

.sidebar .scrollbar {
  width: 20px;
}

.arrow {
  border: 7px solid transparent;
}

.up {
  border-top: 0;
  border-bottom: 7px solid #bbb;
}

.down {
  border-bottom: 0;
  border-top: 7px solid #bbb;
}

.thumb {
  width: 11px;
  border-radius: 6px;
  background-color: #b9b9b9;
}

.space-sidebar {
  flex: 86;
}

.thumb-sidebar {
  flex: 690;
}

.thumb-sidebar + .rest {
  flex: 304;
}

.space-chat {
  flex: 441;
}

.thumb-chat {
  flex: 436;
}

.thumb-chat + .rest {
  flex: 3;
}

/* channel header */

.main {
  display: flex;
  flex-direction: column;
  min-width: 0;
  min-height: 0;
}

.channel-head {
  display: flex;
  align-items: center;
  gap: 18px;
  padding: 14px 27px 7px 22px;
}

.folder-tile {
  display: flex;
  align-items: center;
  justify-content: center;
  width: 61px;
  height: 61px;
  border: 1px solid #c4dfd3;
  border-radius: 14px;
  background-color: #f0f8f5;
  color: #1a8245;
}

.folder-tile .icon {
  width: 28px;
  height: 28px;
  stroke-width: 2.4;
}

.channel-title .title {
  gap: 10px;
  height: 31px;
  color: var(--ink);
  font-size: 25px;
  font-weight: 600;
}

.channel-title .title .icon {
  color: var(--text);
}

.channel-title p {
  display: flex;
  align-items: center;
  gap: 7px;
  height: 33px;
  color: var(--soft);
  font-size: 22px;
}

.channel-title p a {
  font-weight: 500;
}

.channel-tools {
  display: flex;
  align-items: center;
  gap: 8px;
  margin-left: auto;
}

.agent {
  gap: 8px;
  padding: 0 6px 0 9px;
}

.agent .icon {
  stroke: url(#agent);
}

.automate {
  padding: 0 6px;
  font-size: 25px;
}

.channel-tools > .rule {
  margin: 0 6px 0 3px;
}

.people {
  gap: 8px;
  padding: 0 10px 0 7px;
}

.people .plain,
.call .plain {
  height: 100%;
}

.people .rule + .plain {
  margin-left: 4px;
}

.faces .avatar {
  box-shadow: 0 0 0 1px #fff;
}

.faces .avatar + .avatar {
  margin-left: -4px;
}

.faces .avatar:nth-child(1) {
  z-index: 3;
}

.faces .avatar:nth-child(2) {
  z-index: 2;
}

.faces .avatar:nth-child(3) {
  z-index: 1;
}

.faces .count {
  background-color: #efefef;
  color: var(--text);
  font-weight: 400;
}

.call {
  gap: 8px;
  padding: 0 9px 0 12px;
}

.ai {
  gap: 9px;
  margin: 0 23px 0 10px;
  color: var(--text);
  font-size: 25px;
  font-weight: 600;
}

/* view tabs */

.tabs {
  display: flex;
  align-items: center;
  height: 66px;
  padding: 0 22px;
  border-bottom: 2px solid var(--line);
  font-size: 21px;
  font-weight: 600;
}

.tab {
  display: flex;
  align-items: center;
  gap: 9px;
  height: 66px;
  margin-right: 24px;
  color: var(--text);
}

.tab.current {
  margin-right: 14px;
  padding: 0 10px;
  border-bottom: 4px solid var(--ink);
  border-top: 4px solid transparent;
  color: var(--ink);
}

.tab:nth-child(2) {
  margin-right: 20px;
}

.tabs .rule {
  margin-right: 22px;
}

.add-view {
  gap: 12px;
}

/* conversation */

.chat {
  display: flex;
  flex: 1;
  flex-direction: column;
  min-height: 0;
}

.chat-column {
  position: relative;
  display: flex;
  flex: 1;
  min-height: 0;
}

.feed {
  flex: 1;
  padding-top: 54px;
}

.chat-column .scrollbar {
  padding: 6px 0 0;
}

.date-line {
  display: flex;
  align-items: center;
  margin-bottom: 43px;
}

.date-line::before,
.date-line::after {
  content: "";
  flex: 1;
  height: 2px;
  background-color: var(--line);
}

.date-pill {
  gap: 12px;
  height: 60px;
  padding: 0 17px 0 19px;
  border: 1px solid var(--line);
  border-radius: 30px;
  background-color: #fff;
  font-size: 25px;
  font-weight: 600;
}

.message {
  position: relative;
  display: flex;
  gap: 15px;
  margin: 0 100px 28px 45px;
}

.message > .avatar {
  margin-top: 2px;
}

.meta {
  display: flex;
  align-items: center;
  gap: 17px;
  height: 36px;
}

.meta strong {
  color: var(--ink);
  font-weight: 600;
}

time {
  color: var(--soft);
  font-size: 22px;
}

.message p {
  color: var(--ink);
  font-size: 25px;
  line-height: 39px;
}

.message p a {
  color: var(--purple);
}

.reactions {
  display: flex;
  align-items: center;
  gap: 14px;
  margin: 15px 0 40px -2px;
}

.message:has(.reactions) {
  margin-bottom: 0;
}

.reaction {
  gap: 8px;
  height: 48px;
  padding: 0 14px;
  border: 2px solid var(--purple);
  border-radius: 24px;
  background-color: #eef0fe;
  color: var(--purple);
  font-size: 21px;
  font-weight: 600;
}

.reaction .icon {
  width: 28px;
  height: 28px;
}

.react-add {
  width: 45px;
  height: 45px;
  border-radius: 50%;
  background-color: #efefef;
}

.threaded::before {
  content: "";
  position: absolute;
  top: 78px;
  left: 28px;
  width: 26px;
  height: 84px;
  border: solid #ececec;
  border-width: 0 0 2px 2px;
  border-bottom-left-radius: 26px;
}

.thread {
  display: flex;
  align-items: center;
  gap: 14px;
  height: 53px;
  margin: 15px 0 4px 3px;
  font-size: 21px;
  font-weight: 600;
}

.thread time {
  font-weight: 400;
}

.float-tools {
  position: absolute;
  top: 20px;
  right: 23px;
  display: flex;
  flex-direction: column;
  width: 63px;
  padding: 18px 0;
  gap: 30px;
  border: 1px solid var(--line);
  border-radius: 18px;
  background-color: #fff;
}

/* composer */

.composer {
  margin: 0 46px 46px 45px;
  padding: 24px 18px 17px 16px;
  border: 1px solid var(--line);
  border-radius: 18px;
}

.composer textarea {
  display: block;
  width: 100%;
  height: 40px;
  padding: 0 26px;
  font-size: 25px;
  line-height: 40px;
  resize: none;
  overflow: hidden;
}

.composer-bar {
  display: flex;
  align-items: center;
  margin-top: 22px;
}

.round {
  width: 51px;
  height: 51px;
  border-radius: 50%;
  background-color: #efefef;
}

.composer-bar .rule {
  margin: 0 15px;
}

.kind {
  display: flex;
  align-items: center;
  gap: 14px;
  height: 45px;
  margin-right: 2px;
  padding: 0 14px;
  border-radius: 12px;
  background-color: #efefef;
  font-size: 21px;
  font-weight: 600;
}

.kind select {
  height: 32px;
  line-height: 32px;
  appearance: none;
}

.tool {
  width: 56px;
  height: 52px;
}

.composer-bar .tool + .rule {
  margin: 0 4px;
}

.send {
  width: 52px;
  height: 52px;
  margin-left: auto;
  border-radius: 12px;
  background-color: #6249e4;
  color: #fff;
}
```
